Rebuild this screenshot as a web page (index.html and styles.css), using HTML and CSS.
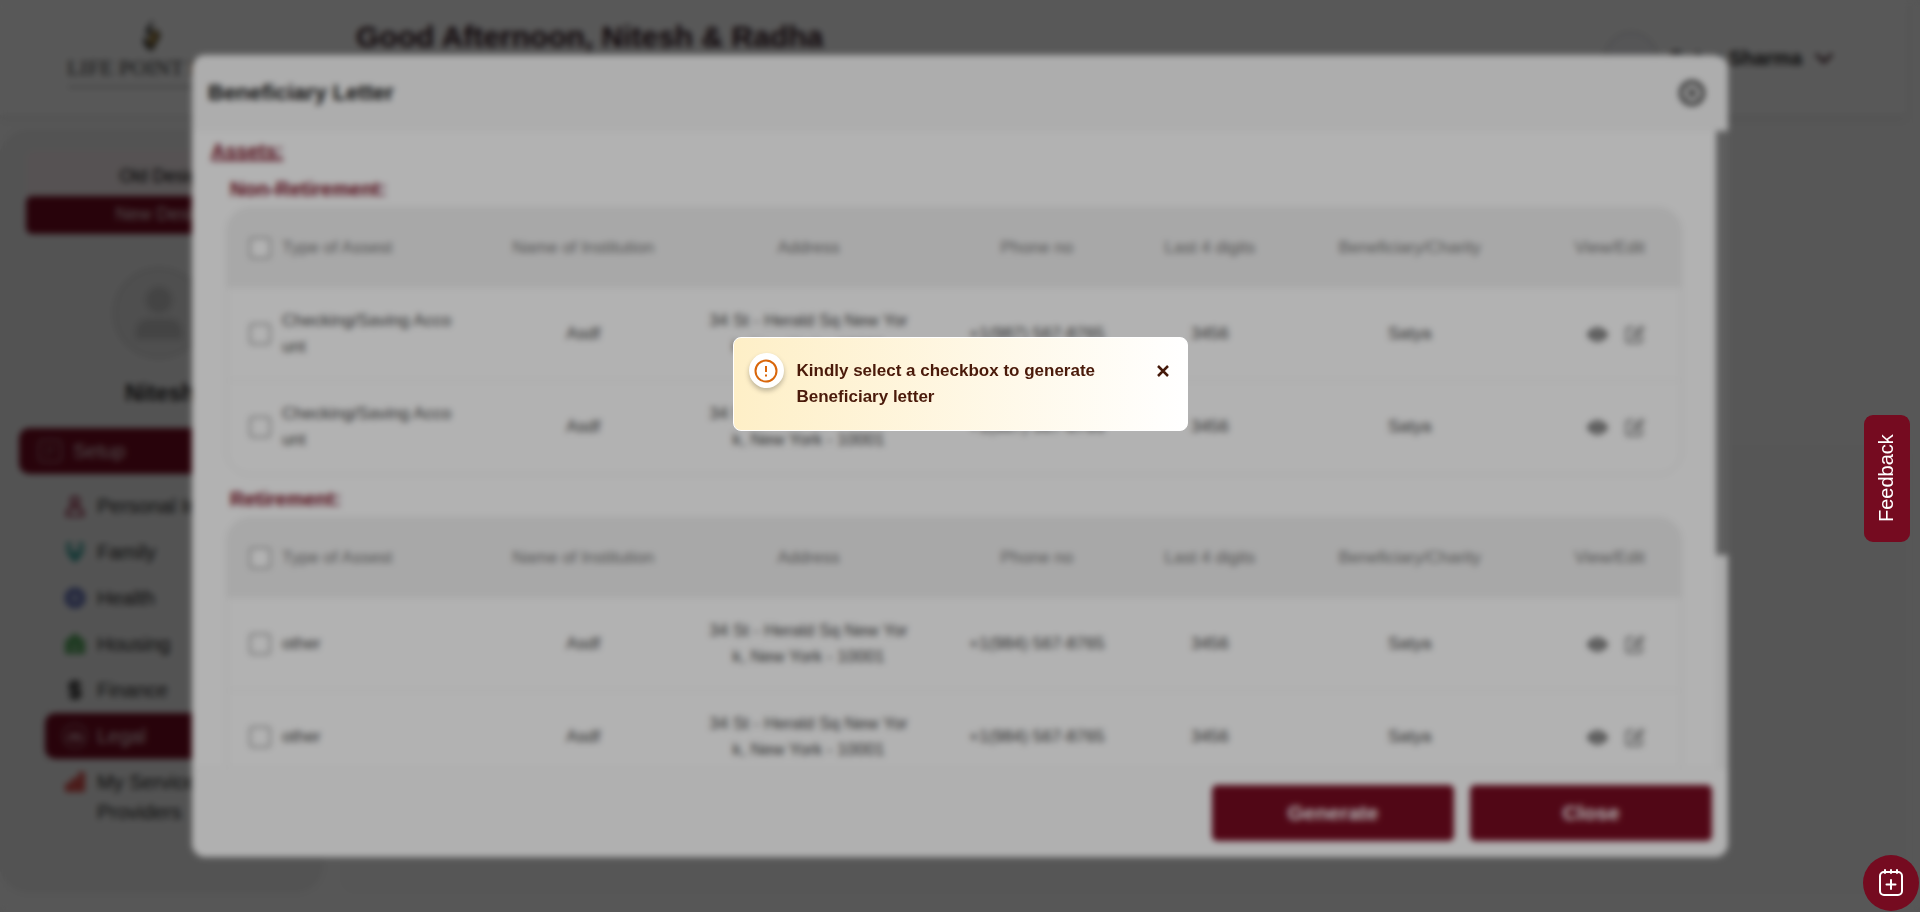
FILE: index.html
```html
<!DOCTYPE html>
<html lang="en">
<head>
<meta charset="utf-8">
<title>Beneficiary Letter</title>
<link rel="stylesheet" href="styles.css">
</head>
<body>
<svg class="sprite" aria-hidden="true">
  <symbol id="eye" viewBox="0 0 16 16"><path d="M10.500 8a2.500 2.500 0 1 1-5 0 2.500 2.500 0 0 1 5 0"/><path d="M0 8s3-5.500 8-5.500S16 8 16 8s-3 5.500-8 5.500S0 8 0 8m8 3.500a3.500 3.500 0 1 0 0-7 3.500 3.500 0 0 0 0 7"/></symbol>
  <symbol id="edit" viewBox="0 0 24 24"><path d="M12 4H5a2 2 0 0 0-2 2v13a2 2 0 0 0 2 2h13a2 2 0 0 0 2-2v-7" fill="none" stroke="currentColor" stroke-width="2"/><path d="M21 2l-9.500 9.500-1.500 4 4-1.500L23 4" fill="none" stroke="currentColor" stroke-width="2" stroke-linejoin="round"/></symbol>
</svg>

<div class="app">
  <header class="topbar">
    <div class="brand">
      <svg class="brand-mark" viewBox="0 0 20 34"><path d="M11 0 3 12l8 9 3-4-5-6z" fill="#3b3b3b"/><path d="M13 8l6 8-9 17-3-6 6-9z" fill="#4a4436"/><path d="M10 11l6 5-8 12-3-6 5-5z" fill="#b8913c"/><path d="M3 16l-2 8 6 8 2-4z" fill="#3b3b3b"/></svg>
      <span class="brand-name">LIFE POINT LAW</span>
      <span class="brand-tag"></span>
    </div>
    <h1 class="greeting">Good Afternoon, Nitesh &amp; Radha</h1>
    <button class="account" type="button">
      <span class="account-photo"></span>
      <span>Satya Sharma</span>
      <svg class="chevron" viewBox="0 0 20 12"><path d="M2 2l8 8 8-8" fill="none" stroke="#3d1a24" stroke-width="3"/></svg>
    </button>
  </header>
  <div class="columns">
    <nav class="sidebar">
      <div class="design-switch">
        <button class="design" type="button">Old Design</button>
        <button class="design design-on" type="button">New Design</button>
      </div>
      <svg class="avatar" viewBox="0 0 92 92"><circle cx="46" cy="46" r="45" fill="#e2e2e2" stroke="#d2d2d2" stroke-width="2"/><circle cx="46" cy="33" r="13" fill="#c4c4c4"/><path d="M23 72v-6q0-14 14-14h18q14 0 14 14v6z" fill="#c4c4c4"/></svg>
      <p class="person">Nitesh</p>
      <a class="nav-setup" href="#">
        <svg class="icon-lg" viewBox="0 0 26 26"><rect x="2" y="2" width="22" height="22" rx="4" fill="none" stroke="#a5707c" stroke-width="2"/><path d="M8 9h10M8 13h10M8 17h6" stroke="#8d5461" stroke-width="2"/></svg>
        Setup
      </a>
      <ul class="subnav">
        <li><a href="#"><svg class="icon" viewBox="0 0 22 22"><circle cx="11" cy="6" r="4" fill="none" stroke="#a1405a" stroke-width="3"/><path d="M3 21q0-9 8-9t8 9z" fill="none" stroke="#a1405a" stroke-width="3"/></svg>Personal Info</a></li>
        <li><a href="#"><svg class="icon" viewBox="0 0 22 22"><circle cx="5" cy="4" r="3" fill="#45a59e"/><circle cx="17" cy="4" r="3" fill="#45a59e"/><path d="M1 8h7l3 4 3-4h7l-5 9-5 5-5-5z" fill="#45a59e"/></svg>Family</a></li>
        <li><a href="#"><svg class="icon" viewBox="0 0 22 22"><path d="M7 3h8v4h4v8h-4v4H7v-4H3V7h4z" fill="#a9b0d2" stroke="#5a69b0" stroke-width="4"/></svg>Health</a></li>
        <li><a href="#"><svg class="icon" viewBox="0 0 22 22"><path d="M11 0l10 8v13H1V8z" fill="#58a860"/><path d="M8 12h6v6H8z" fill="#8fbf93"/></svg>Housing</a></li>
        <li><a href="#"><svg class="icon" viewBox="0 0 22 22"><rect x="4" y="1" width="14" height="20" rx="3" fill="#ccc"/><path d="M16 7q-1-3-5-3-5 0-5 3.500t5 3.500 5 3.500-5 3.500q-4 0-5-3M11 1v20" fill="none" stroke="#333" stroke-width="3"/></svg>Finance</a></li>
        <li><a class="current" href="#"><svg class="icon-legal" viewBox="0 0 28 28"><circle cx="14" cy="14" r="12" fill="none" stroke="#9a606d" stroke-width="2"/><path d="M6 18l5-7 3 4 3-4 5 7M9 18h11" fill="none" stroke="#d8b8c0" stroke-width="2"/></svg>Legal</a></li>
        <li><a class="tall" href="#"><svg class="icon" viewBox="0 0 22 22"><path d="M1 12h6v9H1zM7 7h7v14H7zM14 1h7v20h-7z" fill="#d8504c"/></svg>My Service<br>Providers</a></li>
      </ul>
    </nav>
    <main class="content"></main>
  </div>
</div>

<div class="modal-layer">
  <section class="modal" role="dialog" aria-labelledby="modal-title">
    <header class="modal-head">
      <h2 class="modal-title" id="modal-title">Beneficiary Letter</h2>
      <button class="close-round" type="button" aria-label="Close dialog"><svg viewBox="0 0 28 28"><circle cx="14" cy="14" r="11" fill="none" stroke="#444" stroke-width="4"/><path d="M10 10l8 8M18 10l-8 8" stroke="#333" stroke-width="3"/></svg></button>
    </header>
    <div class="modal-middle">
      <div class="modal-body">
        <h3 class="assets">Assets:</h3>
        <div class="group">
          <h4 class="group-title">Non-Retirement:</h4>
          <div class="table-card">
            <table>
              <thead><tr><th class="c-type"><label><input type="checkbox">Type of Assest</label></th><th class="c-name">Name of Institution</th><th class="c-addr">Address</th><th class="c-phone">Phone no</th><th class="c-last">Last 4 digits</th><th class="c-ben">Beneficiary/Charity</th><th class="c-act">View/Edit</th></tr></thead>
              <tbody>
                <tr><td><label><input type="checkbox"><span>Checking/Saving Acco<br>unt</span></label></td><td>Asdf</td><td>34 St - Herald Sq New Yor<br>k, New York - 10001</td><td>+1(987) 567-8765</td><td>3456</td><td>Satya</td><td class="act"><button type="button" aria-label="View"><svg><use href="#eye"/></svg></button><button type="button" aria-label="Edit"><svg><use href="#edit"/></svg></button></td></tr>
                <tr><td><label><input type="checkbox"><span>Checking/Saving Acco<br>unt</span></label></td><td>Asdf</td><td>34 St - Herald Sq New Yor<br>k, New York - 10001</td><td>+1(987) 567-8765</td><td>3456</td><td>Satya</td><td class="act"><button type="button" aria-label="View"><svg><use href="#eye"/></svg></button><button type="button" aria-label="Edit"><svg><use href="#edit"/></svg></button></td></tr>
              </tbody>
            </table>
          </div>
          <h4 class="group-title">Retirement:</h4>
          <div class="table-card">
            <table>
              <thead><tr><th class="c-type"><label><input type="checkbox">Type of Assest</label></th><th class="c-name">Name of Institution</th><th class="c-addr">Address</th><th class="c-phone">Phone no</th><th class="c-last">Last 4 digits</th><th class="c-ben">Beneficiary/Charity</th><th class="c-act">View/Edit</th></tr></thead>
              <tbody>
                <tr><td><label><input type="checkbox">other</label></td><td>Asdf</td><td>34 St - Herald Sq New Yor<br>k, New York - 10001</td><td>+1(984) 567-8765</td><td>3456</td><td>Satya</td><td class="act"><button type="button" aria-label="View"><svg><use href="#eye"/></svg></button><button type="button" aria-label="Edit"><svg><use href="#edit"/></svg></button></td></tr>
                <tr><td><label><input type="checkbox">other</label></td><td>Asdf</td><td>34 St - Herald Sq New Yor<br>k, New York - 10001</td><td>+1(984) 567-8765</td><td>3456</td><td>Satya</td><td class="act"><button type="button" aria-label="View"><svg><use href="#eye"/></svg></button><button type="button" aria-label="Edit"><svg><use href="#edit"/></svg></button></td></tr>
              </tbody>
            </table>
          </div>
        </div>
      </div>
      <div class="scroll-track"><div class="scroll-thumb"></div></div>
    </div>
    <footer class="modal-foot">
      <button class="primary" type="button">Generate</button>
      <button class="primary" type="button">Close</button>
    </footer>
  </section>
</div>

<div class="toast-layer">
  <div class="toast" role="alert">
    <span class="toast-icon"><svg viewBox="0 0 24 24"><circle cx="12" cy="12" r="10.500" fill="none" stroke="#d9660a" stroke-width="2"/><path d="M12 7v6M12 15.500v2" stroke="#d9660a" stroke-width="2"/></svg></span>
    <p class="toast-text">Kindly select a checkbox to generate Beneficiary letter</p>
    <button class="toast-close" type="button" aria-label="Dismiss"><svg viewBox="0 0 14 14"><path d="M2 2l10 10M12 2L2 12" stroke="#451a0a" stroke-width="2.500"/></svg></button>
  </div>
</div>

<button class="feedback" type="button">Feedback</button>
<button class="fab" type="button" aria-label="Add appointment"><svg viewBox="0 0 26 28"><rect x="2" y="3" width="22" height="23" rx="4" fill="none" stroke="#fff" stroke-width="2"/><path d="M7 1v3M13 1v3M19 1v3M13 11v9M8.500 15.500h9" stroke="#fff" stroke-width="2" stroke-linecap="round"/></svg></button>
</body>
</html>
```

FILE: styles.css
```css
* { box-sizing: border-box; }
body {
  margin: 0;
  height: 100vh;
  overflow: hidden;
  font-family: "Liberation Sans", Arial, sans-serif;
  background: #fff;
  color: #222;
}
button { font: inherit; border: 0; background: none; padding: 0; cursor: pointer; }
h1, h2, h3, h4, p, ul { margin: 0; padding: 0; }
a { color: inherit; text-decoration: none; }
.sprite { display: none; }

/* page behind the dialog */
.app { height: 100vh; display: flex; flex-direction: column; background: #fbfbfb; }
.topbar {
  display: flex;
  align-items: flex-start;
  height: 115px;
  margin-right: 14px;
  padding: 0 72px 0 68px;
  background: #fff;
  box-shadow: 0 4px 8px rgba(0, 0, 0, .08);
}
.brand { display: flex; flex-direction: column; align-items: center; width: 168px; margin-right: 120px; padding-top: 19px; }
.brand-mark { width: 20px; height: 34px; }
.brand-name { font: 22px/30px "Liberation Serif", serif; color: #333; white-space: nowrap; }
.brand-tag { width: 100%; height: 2px; margin-top: 3px; background: #bbb; }
.greeting { flex: 1; padding-top: 20px; font-size: 30px; line-height: 34px; color: #2a1019; }
.account { display: flex; align-items: center; gap: 12px; margin-top: 31px; font-size: 20px; font-weight: bold; color: #1c1c1c; }
.account-photo { width: 54px; height: 54px; border: 2px solid #ddd; border-radius: 50%; background: #f7f7fb; }
.chevron { width: 20px; height: 12px; }
.columns { flex: 1; display: flex; gap: 16px; padding: 13px 14px 18px 0; }
.sidebar {
  width: 324px;
  padding: 22px 26px 0 19px;
  background: #f0f0f0;
  border-radius: 28px;
  font-size: 20px;
  color: #222;
}
.design-switch { margin-left: 7px; background: #f6edef; border-radius: 8px; font-size: 18px; }
.design { display: block; width: 100%; height: 46px; padding: 6px 0 0 4px; }
.design-on { height: 38px; padding: 0 0 2px 4px; border-radius: 6px; background: #750b20; color: #eadcdf; }
.avatar { display: block; width: 92px; height: 92px; margin: 33px auto 0 94px; }
.person { margin: 20px 0 21px 106px; font-size: 23px; line-height: 28px; font-weight: bold; }
.nav-setup { display: flex; align-items: center; gap: 10px; height: 46px; padding-left: 18px; border-radius: 10px; background: #750b20; color: #eadcdf; }
.icon-lg { width: 26px; height: 26px; flex: none; }
.icon-legal { width: 28px; height: 28px; flex: none; }
.icon { width: 22px; height: 22px; flex: none; margin: 0 3px; }
.subnav { list-style: none; margin: 9px 0 0 25px; border-left: 1px solid #ddd; }
.subnav a { display: flex; align-items: center; gap: 8px; height: 46px; padding-left: 16px; line-height: 30px; }
.subnav .current { border-radius: 10px; background: #750b20; color: #eadcdf; }
.subnav .tall { height: 76px; align-items: flex-start; padding-top: 8px; }
.subnav .tall .icon { margin-top: 4px; }
.content { flex: 1; margin-top: 317px; background: #f8f8f8; border-radius: 16px; }

/* dialog */
.modal-layer { position: fixed; inset: 0; display: flex; align-items: center; justify-content: center; background: rgba(0, 0, 0, .5); }
.modal { display: flex; flex-direction: column; width: 80%; height: 88%; border-radius: 14px; overflow: hidden; background: #fff; }
.modal-head { display: flex; align-items: center; justify-content: space-between; height: 76px; padding: 0 22px 0 16px; background: #f8f8f8; }
.modal-title { font-size: 22px; color: #111; }
.close-round, .close-round svg { display: block; width: 28px; height: 28px; }
.modal-middle { flex: 1; display: flex; min-height: 0; }
.modal-body { flex: 1; overflow: hidden; padding: 6px 34px 0 19px; }
.assets { font-size: 20px; line-height: 28px; color: #750b20; text-decoration: underline; }
.group { padding-left: 15px; }
.group-title { padding: 12px 0 6px 4px; font-size: 20px; line-height: 24px; color: #750b20; }
.scroll-track { width: 12px; background: #f6f6f6; }
.scroll-thumb { height: 66.5%; background: #888; }
.table-card { border: 1px solid #e8e8e8; border-radius: 24px; overflow: hidden; }
table { width: 100%; table-layout: fixed; border-collapse: collapse; font-size: 17px; line-height: 26px; }
th, td { padding: 0; text-align: center; font-weight: normal; }
th { height: 80px; background: #f1f1f1; color: #777; }
td { height: 93px; color: #444; }
tbody tr + tr td { border-top: 1px solid #f2f2f2; }
label { display: flex; align-items: center; gap: 11px; padding-left: 22px; text-align: left; }
input[type="checkbox"] { appearance: none; flex: none; width: 22px; height: 22px; margin: 0; border: 2px solid #aaa; border-radius: 4px; background: #fff; }
.c-type { width: 17%; }
.c-name { width: 15%; }
.c-addr { width: 16%; }
.c-phone { width: 15.4%; }
.c-last { width: 8.4%; }
.c-ben { width: 19.1%; }
.c-act, .act { padding-right: 36px; text-align: right; }
.act button { margin-left: 16px; color: #666; vertical-align: middle; }
.act svg { display: block; width: 21px; height: 21px; fill: currentColor; }
.modal-foot { display: flex; justify-content: flex-end; gap: 16px; height: 89px; padding: 16px; background: #fdfdfd; border-top: 1px solid #f2f2f2; }
.primary { width: 242px; border-radius: 5px; background: #750b20; color: #fff; font-size: 21px; font-weight: bold; }

/* alert */
.toast-layer { position: fixed; inset: 0; display: flex; justify-content: center; align-items: flex-start; padding-top: 337px; background: rgba(0, 0, 0, .3); backdrop-filter: blur(3px); }
.toast { display: flex; align-items: flex-start; width: 455px; min-height: 94px; padding: 15px; border: 1px solid #fff; border-radius: 8px; background: linear-gradient(to right, #feefc7, #fff); }
.toast-icon { display: flex; align-items: center; justify-content: center; flex: none; width: 35px; height: 35px; border-radius: 50%; background: #fff; box-shadow: 0 3px 5px rgba(0, 0, 0, .25); }
.toast-icon svg { width: 24px; height: 24px; }
.toast-text { flex: 1; padding: 5px 32px 0 13px; font-size: 17px; line-height: 26px; font-weight: bold; color: #4a1a0a; }
.toast-close { margin: 11px 2px 0 0; }
.toast-close svg { display: block; width: 14px; height: 14px; }

.feedback {
  position: fixed;
  right: 10px;
  top: 415px;
  width: 46px;
  height: 127px;
  border-radius: 9px;
  background: #750b20;
  color: #fff;
  font-size: 20px;
  writing-mode: vertical-rl;
  transform: rotate(180deg);
}
.fab { position: fixed; right: 1px; bottom: 1px; display: flex; align-items: center; justify-content: center; width: 56px; height: 56px; border-radius: 50%; background: #750b20; }
.fab svg { width: 26px; height: 28px; }
```
